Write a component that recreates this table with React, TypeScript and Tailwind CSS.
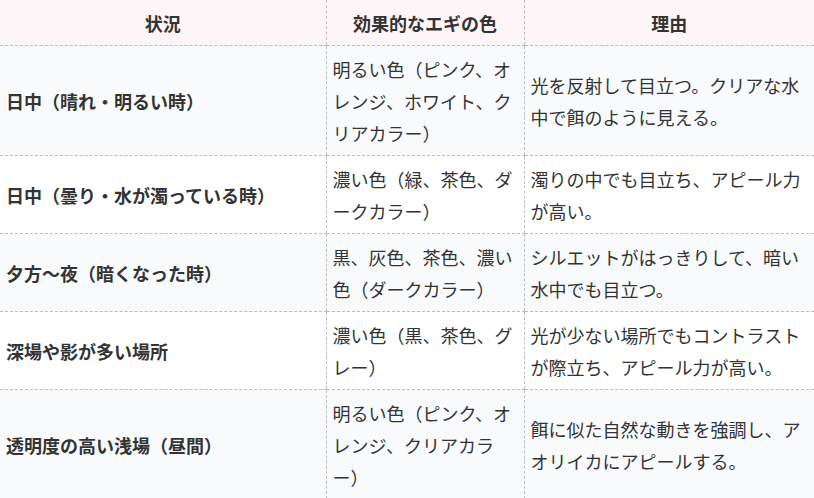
import React from "react";

type Row = {
  situation: string;
  color: string;
  reason: string;
};

const rows: Row[] = [
  {
    situation: "日中（晴れ・明るい時）",
    color: "明るい色（ピンク、オレンジ、ホワイト、クリアカラー）",
    reason: "光を反射して目立つ。クリアな水中で餌のように見える。",
  },
  {
    situation: "日中（曇り・水が濁っている時）",
    color: "濃い色（緑、茶色、ダークカラー）",
    reason: "濁りの中でも目立ち、アピール力が高い。",
  },
  {
    situation: "夕方〜夜（暗くなった時）",
    color: "黒、灰色、茶色、濃い色（ダークカラー）",
    reason: "シルエットがはっきりして、暗い水中でも目立つ。",
  },
  {
    situation: "深場や影が多い場所",
    color: "濃い色（黒、茶色、グレー）",
    reason: "光が少ない場所でもコントラストが際立ち、アピール力が高い。",
  },
  {
    situation: "透明度の高い浅場（昼間）",
    color: "明るい色（ピンク、オレンジ、クリアカラー）",
    reason: "餌に似た自然な動きを強調し、アオリイカにアピールする。",
  },
];

const cell = "px-[6px] py-[6.5px] align-middle border-dashed border-[#bdbdbd]";

export default function App() {
  return (
    <div
      lang="ja"
      className="w-[814px] bg-white text-[#333] text-[18px] leading-[32px]"
      style={{ fontFamily: '"Noto Sans CJK JP", "Noto Sans", sans-serif' }}
    >
      <table className="w-[814px] table-fixed border-collapse">
        <colgroup>
          <col className="w-[326px]" />
          <col className="w-[198px]" />
          <col className="w-[290px]" />
        </colgroup>
        <thead>
          <tr className="bg-[#fdf5f7]">
            <th className={`${cell} border-b text-center font-bold`}>状況</th>
            <th className={`${cell} border-b border-l text-center font-bold`}>効果的なエギの色</th>
            <th className={`${cell} border-b border-l text-center font-bold`}>理由</th>
          </tr>
        </thead>
        <tbody>
          {rows.map((row, i) => (
            <tr key={i} className={i % 2 === 0 ? "bg-[#f9fafc]" : "bg-white"}>
              <td className={`${cell} border-b font-bold`}>{row.situation}</td>
              <td className={`${cell} border-b border-l`}>{row.color}</td>
              <td className={`${cell} border-b border-l`}>{row.reason}</td>
            </tr>
          ))}
        </tbody>
      </table>
    </div>
  );
}
